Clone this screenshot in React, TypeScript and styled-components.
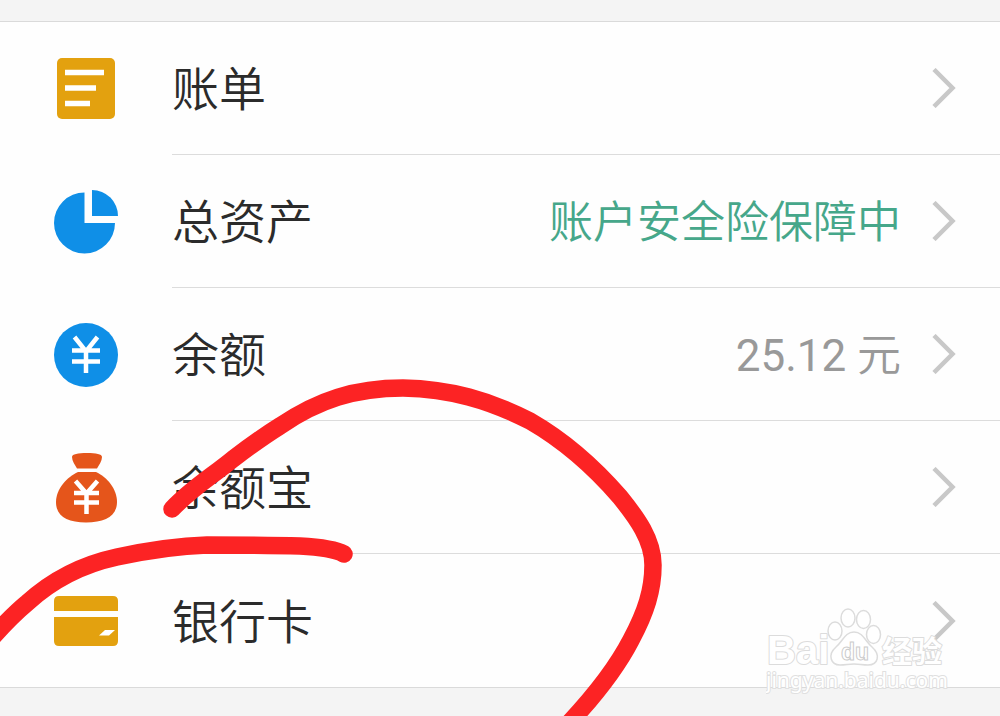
import React from "react";
import styled, { createGlobalStyle } from "styled-components";

const GlobalStyle = createGlobalStyle`
  * { box-sizing: border-box; }
  body {
    margin: 0;
    background: #f4f4f4;
    font-family: Roboto, "Noto Sans CJK SC", sans-serif;
    font-weight: 350;
    color: #2b2b2b;
  }
`;

const Page = styled.main`
  position: relative;
  min-height: 100vh;
  padding: 21px 0 28px;
  overflow: hidden;
`;

const List = styled.ul`
  list-style: none;
  margin: 0;
  padding: 0;
  background: #fefefe;
  border-top: 1px solid #dadada;
  border-bottom: 1px solid #dadada;
`;

const Row = styled.a`
  display: flex;
  min-height: 133px;
  color: inherit;
  text-decoration: none;
`;

const IconSlot = styled.span`
  flex: none;
  display: flex;
  align-items: center;
  justify-content: center;
  width: 172px;
`;

const Content = styled.span<{ $divided: boolean }>`
  flex: 1;
  display: flex;
  align-items: center;
  padding-right: 44px;
  border-bottom: ${(p) => (p.$divided ? "1px solid #dcdcdc" : "0")};
`;

const Label = styled.span`
  flex: 1;
  padding-top: 4px;
  font-size: 47px;
  line-height: 64px;
`;

const Value = styled.span<{ $color: string }>`
  margin-right: 31px;
  padding-top: 4px;
  font-size: 44px;
  line-height: 64px;
  color: ${(p) => p.$color};
`;

const Amount = styled.span`
  font-weight: 400;
`;

const Marks = styled.svg`
  position: absolute;
  top: 0;
  left: 0;
  pointer-events: none;
`;

const Watermark = styled.svg`
  position: absolute;
  right: 50px;
  bottom: 16px;
  pointer-events: none;
`;

const Chevron = () => (
  <svg width="24" height="40" viewBox="0 0 24 40" aria-hidden="true">
    <path d="M2 1.500L20.500 20L2 38.500" fill="none" stroke="#c8c8c8" strokeWidth="4.500" />
  </svg>
);

const BillIcon = () => (
  <svg width="64" height="64" viewBox="0 0 64 64" aria-hidden="true">
    <rect x="3" y="1" width="58" height="61" rx="5" fill="#e3a10f" />
    <path d="M11 15.500H50M11 31H42M11 46.500H36" stroke="#fff" strokeWidth="5.500" />
  </svg>
);

const AssetsIcon = () => (
  <svg width="64" height="64" viewBox="0 0 64 64" aria-hidden="true">
    <path d="M30.500 2.500A30.500 30.500 0 1 0 61 33H30.500Z" fill="#0f8fe7" />
    <path d="M38 0A26 26 0 0 1 64 26H38Z" fill="#0f8fe7" />
  </svg>
);

const BalanceIcon = () => (
  <svg width="64" height="64" viewBox="0 0 64 64" aria-hidden="true">
    <circle cx="32" cy="32" r="32" fill="#0f8fe7" />
    <path d="M20.500 14L32 28.500L43.500 14M18 27.500H46M18 38.500H46M32 27V50" fill="none" stroke="#fff" strokeWidth="4.500" />
  </svg>
);

const BagIcon = () => (
  <svg width="64" height="70" viewBox="0 0 64 70" aria-hidden="true">
    <path d="M18 4C18 1 24 0 33 0S48 1 48 4C48 8 45 12 43 15.500H23C21 12 18 8 18 4Z" fill="#e5551b" />
    <path d="M24 19H42C53 24 63 36 63 49C63 63 51 69.500 32 69.500S2 63 2 49C2 36 13 24 24 19Z" fill="#e5551b" />
    <path d="M21.500 28L32.500 40.500L43.500 28M20 40H45M20 49.500H45M32.500 39V61" fill="none" stroke="#fff" strokeWidth="4.500" />
  </svg>
);

const CardIcon = () => (
  <svg width="64" height="50" viewBox="0 0 64 50" aria-hidden="true">
    <path d="M0 15V5Q0 0 5 0H59Q64 0 64 5V15Z" fill="#e3a10f" />
    <path d="M0 21H64V45Q64 50 59 50H5Q0 50 0 45Z" fill="#e3a10f" />
    <path d="M51 34H61L55 39.500H45Z" fill="#fff" />
  </svg>
);

const rows = [
  { label: "账单", icon: <BillIcon /> },
  { label: "总资产", icon: <AssetsIcon />, value: "账户安全险保障中", color: "#46a78a" },
  { label: "余额", icon: <BalanceIcon />, value: <><Amount>25.12</Amount> 元</>, color: "#999999" },
  { label: "余额宝", icon: <BagIcon /> },
  { label: "银行卡", icon: <CardIcon /> },
];

export default function App() {
  return (
    <Page>
      <GlobalStyle />
      <List>
        {rows.map((row, i) => (
          <li key={row.label}>
            <Row href="#">
              <IconSlot>{row.icon}</IconSlot>
              <Content $divided={i < rows.length - 1}>
                <Label>{row.label}</Label>
                {row.value && <Value $color={row.color}>{row.value}</Value>}
                <Chevron />
              </Content>
            </Row>
          </li>
        ))}
      </List>
      <Marks width="1000" height="716" viewBox="0 0 1000 716" aria-hidden="true">
        <g fill="none" stroke="#fc2324" strokeWidth="17.500" strokeLinecap="round" strokeLinejoin="round">
          <path d="M172 509C192 488 211 477 233 459C250 446 264 436 280 426C318 400 355 388 403 388C450 389 489 400 530 421C563 440 594 467 620 497C637 518 653 540 653 565C653 590 646 612 631 640C617 667 598 692 570 722" />
          <path d="M344 554C335 549 320 547 300 546C270 545 235 545 207 545C175 546 145 551 117 557C80 565 50 582 27 603C15 613 5 623 -10 640" />
        </g>
      </Marks>
      <Watermark width="184" height="92" viewBox="0 0 184 92">
        <g fill="#ffffff" stroke="#dcdcdc" strokeWidth="2" strokeLinejoin="round" paintOrder="stroke" fontWeight="700" fontFamily='"Liberation Sans", "Noto Sans CJK SC", sans-serif'>
          <text x="1" y="56" fontSize="40">Bai</text>
          <text x="116" y="54" fontSize="30">经验</text>
        </g>
        <g fill="#ffffff" stroke="#dcdcdc" strokeWidth="1.500">
          <ellipse cx="69" cy="23" rx="7" ry="9" />
          <ellipse cx="82" cy="10" rx="7" ry="9" />
          <ellipse cx="97.500" cy="11.500" rx="7" ry="9" />
          <ellipse cx="107.500" cy="26.500" rx="7" ry="9" />
          <path d="M88 24C97 24 99 33 106 39C115 47 112 57 102 57C96 57 94 56 88 56S80 57 74 57C65 57 61 47 70 39C77 33 79 24 88 24Z" />
          <text x="75" y="52" fontSize="23" strokeWidth="1" stroke="#cccccc" fontWeight="700" fontFamily='"Liberation Sans", sans-serif'>du</text>
        </g>
        <text x="0" y="80" fontSize="21" fontFamily='"Noto Sans", sans-serif' fontWeight="400" fill="#ffffff" stroke="#e0e0e0" strokeWidth="2" paintOrder="stroke">
          jingyan.baidu.com
        </text>
      </Watermark>
    </Page>
  );
}
